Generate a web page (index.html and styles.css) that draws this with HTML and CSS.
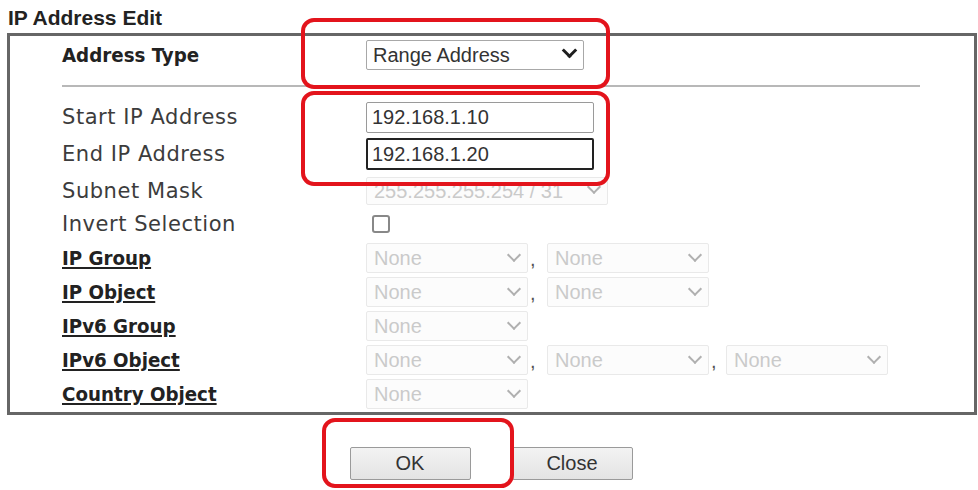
FILE: index.html
```html
<!DOCTYPE html>
<html lang="en">
  <head>
    <meta charset="UTF-8" />
    <meta name="viewport" content="width=device-width, initial-scale=1.0" />
    <title>IP Address Edit</title>
    <link rel="stylesheet" href="styles.css">
  </head>
  <body>
    <h3 class="title">IP Address Edit</h3>
    <div class="panel">
      <div class="row row-type">
        <label class="label strong" for="addrType">Address Type</label>
        <span class="pick pick-type">
          <select id="addrType" class="select">
            <option>Range Address</option>
            <option>Single Address</option>
            <option>Subnet Address</option>
          </select>
        </span>
      </div>
      <hr class="divider" />
      <div class="row row-start">
        <label class="label" for="startIp">Start IP Address</label>
        <input type="text" id="startIp" class="field" value="192.168.1.10" />
      </div>
      <div class="row row-end">
        <label class="label" for="endIp">End IP Address</label>
        <input type="text" id="endIp" class="field focus" value="192.168.1.20" />
      </div>
      <div class="row row-mask">
        <label class="label">Subnet Mask</label>
        <span class="pick pick-off pick-mask">
          <select class="select" disabled>
            <option>255.255.255.254 / 31</option>
          </select>
        </span>
      </div>
      <div class="row">
        <label class="label" for="invert">Invert Selection</label>
        <div class="ctrls"><input type="checkbox" id="invert" class="check" /></div>
      </div>
      <div class="row">
        <a href="#" class="label strong link">IP Group</a>
        <div class="ctrls">
          <span class="pick pick-off"><select class="select" disabled><option>None</option></select></span>
          <span class="comma">,</span>
          <span class="pick pick-off"><select class="select" disabled><option>None</option></select></span>
        </div>
      </div>
      <div class="row">
        <a href="#" class="label strong link">IP Object</a>
        <div class="ctrls">
          <span class="pick pick-off"><select class="select" disabled><option>None</option></select></span>
          <span class="comma">,</span>
          <span class="pick pick-off"><select class="select" disabled><option>None</option></select></span>
        </div>
      </div>
      <div class="row">
        <a href="#" class="label strong link">IPv6 Group</a>
        <div class="ctrls">
          <span class="pick pick-off"><select class="select" disabled><option>None</option></select></span>
        </div>
      </div>
      <div class="row">
        <a href="#" class="label strong link">IPv6 Object</a>
        <div class="ctrls">
          <span class="pick pick-off"><select class="select" disabled><option>None</option></select></span>
          <span class="comma">,</span>
          <span class="pick pick-off"><select class="select" disabled><option>None</option></select></span>
          <span class="comma">,</span>
          <span class="pick pick-off"><select class="select" disabled><option>None</option></select></span>
        </div>
      </div>
      <div class="row">
        <a href="#" class="label strong link">Country Object</a>
        <div class="ctrls">
          <span class="pick pick-off"><select class="select" disabled><option>None</option></select></span>
        </div>
      </div>
    </div>
    <div class="actions">
      <button type="button" class="btn">OK</button>
      <button type="button" class="btn">Close</button>
    </div>

    <!-- red callouts drawn over the form -->
    <div class="mark mark-type"></div>
    <div class="mark mark-range"></div>
    <div class="mark mark-ok"></div>
  </body>
</html>
```

FILE: styles.css
```css
html,
body {
  height: 490px;
}
body {
  margin: 0;
  position: relative;
  overflow: hidden;
  background-color: #fff;
  color: #333;
  font-family: "Liberation Sans", Arial, sans-serif;
}
.title {
  margin: 0;
  padding: 6px 0 0 8px;
  font-size: 21px;
  line-height: 24px;
  font-weight: bold;
  color: #222;
}
.panel {
  box-sizing: border-box;
  width: 970px;
  margin: 3px 0 0 7px;
  padding: 0 0 1px 52px;
  border: 3px solid #666;
}
.row {
  display: grid;
  grid-template-columns: 304px 1fr;
  align-items: center;
  height: 34px;
}
.row-type {
  height: 38px;
}
.row-start {
  margin-top: 13px;
}
.row-end {
  height: 40px;
}
.row-mask {
  height: 33px;
}
.label {
  font-family: "DejaVu Sans", Verdana, sans-serif;
  font-size: 21px;
  letter-spacing: 0.55px;
  color: #3c3c3c;
  justify-self: start;
}
.label.strong {
  font-family: "DejaVu Sans Condensed", "DejaVu Sans", Tahoma, sans-serif;
  font-weight: bold;
  font-size: 20.3px;
  letter-spacing: 0;
  color: #222;
}
.link {
  text-decoration: underline;
  text-underline-offset: 2px;
}
.divider {
  width: 858px;
  height: 2px;
  margin: 11px 0 0 0;
  border: none;
  background-color: #b8b8b8;
}
.ctrls {
  display: flex;
  align-items: center;
}
.field {
  box-sizing: border-box;
  width: 228px;
  height: 31px;
  padding: 0 5px;
  border: 1px solid #9a9a9a;
  border-radius: 2px;
  font-family: "Liberation Sans", Arial, sans-serif;
  font-size: 20px;
  color: #333;
  outline: none;
}
.field.focus {
  height: 32px;
  padding: 0 4px;
  border: 2px solid #222;
}
.pick {
  position: relative;
  display: inline-block;
  justify-self: start;
}
.pick::after {
  content: "";
  position: absolute;
  pointer-events: none;
  box-sizing: border-box;
}
.select {
  -webkit-appearance: none;
  appearance: none;
  box-sizing: border-box;
  display: block;
  width: 162px;
  height: 30px;
  margin: 0;
  padding: 0 0 0 7px;
  border: 1px solid #e0e0e0;
  border-radius: 2px;
  background-color: #fbfbfb;
  font-family: "Liberation Sans", Arial, sans-serif;
  font-size: 20px;
  color: #b4b4b4;
}
.pick-off::after {
  right: 9px;
  top: 7px;
  width: 10px;
  height: 10px;
  border-right: 2px solid #b0b0b0;
  border-bottom: 2px solid #b0b0b0;
  transform: rotate(45deg);
}
.pick-type .select {
  width: 218px;
  padding-left: 6px;
  border: 1px solid #a8a8a8;
  background-color: #fff;
  color: #333;
}
.pick-type::after {
  right: 9px;
  top: 5px;
  width: 11px;
  height: 11px;
  border-right: 3px solid #1e1e1e;
  border-bottom: 3px solid #1e1e1e;
  transform: rotate(45deg);
}
.pick-mask .select {
  width: 242px;
  height: 28px;
  padding-top: 0;
  line-height: 20px;
}
.pick-mask::after {
  top: 5px;
}
.comma {
  width: 19px;
  padding: 3px 0 0 2px;
  box-sizing: border-box;
  font-size: 20px;
  color: #555;
}
.ctrls .pick + .comma + .pick + .comma {
  width: 17px;
}
.check {
  -webkit-appearance: none;
  appearance: none;
  width: 18px;
  height: 18px;
  margin: 0 0 0 6px;
  border: 2px solid #888;
  border-radius: 3px;
  background-color: #fff;
}
.actions {
  display: flex;
  justify-content: center;
  gap: 41px;
  margin-top: 32px;
  padding-left: 4px;
}
.btn {
  width: 121px;
  height: 33px;
  border: 1px solid #9a9a9a;
  border-radius: 2px;
  background: linear-gradient(#f3f3f3, #e3e3e3);
  font-family: "Liberation Sans", Arial, sans-serif;
  font-size: 20px;
  color: #333;
}
.mark {
  position: absolute;
  box-sizing: border-box;
  border: 4px solid #e3141c;
  border-radius: 13px;
  pointer-events: none;
}
.mark-type {
  left: 301px;
  top: 18px;
  width: 309px;
  height: 71px;
}
.mark-range {
  left: 301px;
  top: 91px;
  width: 309px;
  height: 95px;
}
.mark-ok {
  left: 322px;
  top: 418px;
  width: 192px;
  height: 70px;
}
```
